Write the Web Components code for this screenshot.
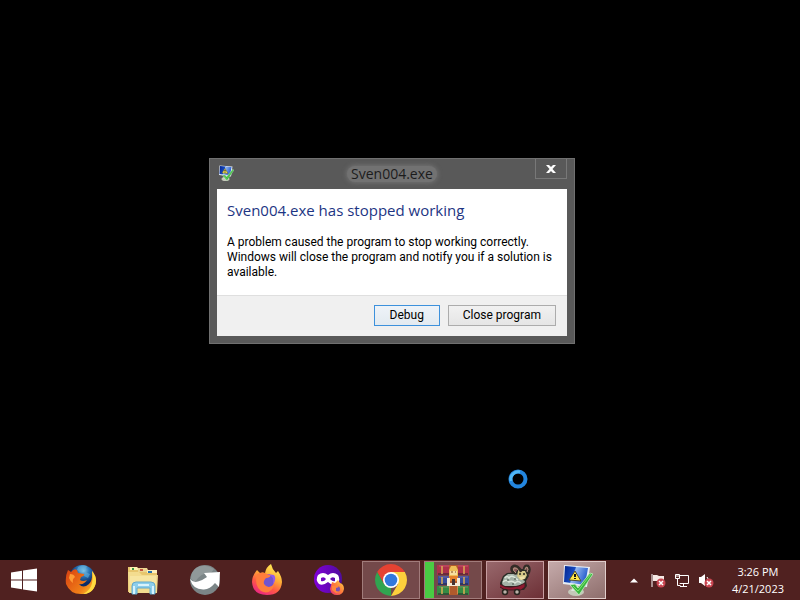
<!DOCTYPE html>
<html lang="en">
<head>
<meta charset="utf-8">
<title>Desktop</title>
<style>
html, body { height: 100%; }
body { margin: 0; background: #000; overflow: hidden; font-family: "Open Sans", "Noto Sans", sans-serif; font-size: 12px; }
</style>
</head>
<body>
<desktop-shell>
  <error-dialog slot="window" caption="Sven004.exe">
    <span slot="heading">Sven004.exe has stopped working</span>
    A problem caused the program to stop working correctly. Windows will close the program and notify you if a solution is available.
    <dialog-button slot="actions" primary>Debug</dialog-button>
    <dialog-button slot="actions">Close program</dialog-button>
  </error-dialog>
  <busy-cursor slot="window"></busy-cursor>
  <task-bar slot="bar">
    <task-item kind="start" label="Start"></task-item>
    <task-item kind="firefoxold" label="Firefox"></task-item>
    <task-item kind="explorer" label="File Explorer"></task-item>
    <task-item kind="share" label="Shortcut"></task-item>
    <task-item kind="firefox" label="Firefox Browser"></task-item>
    <task-item kind="private" label="Private browsing"></task-item>
    <task-item kind="chrome" label="Chrome" open></task-item>
    <task-item kind="winrar" label="WinRAR" open progress></task-item>
    <task-item kind="sheep" label="Sven004" open></task-item>
    <task-item kind="warning" label="Error report" open active></task-item>
    <system-tray slot="tray" time="3:26 PM" date="4/21/2023"></system-tray>
  </task-bar>
</desktop-shell>
<script>
const icons = {
start: `<svg viewBox="0 0 32 32"><path fill="#fff" d="M3 7.400 14 5.800V14.400H3ZM15 5.600 29 3.600V14.400H15ZM3 15.400H14V24.200L3 22.600ZM15 15.400H29V26.600L15 24.400Z"/></svg>`,
firefoxold: `<svg viewBox="0 0 32 32"><defs><radialGradient id="b" cx=".55" cy=".2"><stop stop-color="#8fd0ee"/><stop offset=".45" stop-color="#2a78b8"/><stop offset="1" stop-color="#0c2c68"/></radialGradient><linearGradient id="o" x1="0" x2="1" y1=".3" y2="1"><stop stop-color="#dc4a12"/><stop offset=".6" stop-color="#f08018"/><stop offset="1" stop-color="#ffd83a"/></linearGradient></defs><circle cx="17" cy="14" r="13" fill="url(#b)"/><path d="M13 3q5-3 9-1l-2 4-5 2-3-2M20 8l5 2-2 4-4-2" fill="#62afd9" opacity=".6"/><path fill="url(#o)" d="M3 6 6 8Q9 4 12 6L13 9 19 10Q20 12 16 13L15 16Q18 18 22 16Q19 21 14 20Q18 25 24 20Q28 16 27 7Q33 14 30 22Q26 31 16 30Q5 30 1 20Q0 12 3 6Z"/><path d="M27 7q7 8 2 17-4 6-11 6 8-4 9-11 1-5 0-12" fill="#ffdb40"/><path d="M5 10q4 0 5 3-3 2-2 6-3-2-4-5" fill="#ff9b35"/></svg>`,
explorer: `<svg viewBox="0 0 32 32"><path d="M1 3h9l2 3h18v22H1Z" fill="#e7c66d"/><path d="M3 3h7l2 3H3" fill="#fff1af"/><path d="M11 4h9l2 4H11" fill="#ecd691"/><path d="M20 6h10v3H20" fill="#fff0bd"/><path d="M1 8h11l3 3h16l-1 18H2Z" fill="#f3dc8f"/><path d="M5 5h2" stroke="#3a9b43" stroke-width="2"/><path d="M13 6h3" stroke="#c45640" stroke-width="2"/><path d="M21 8h4" stroke="#2672ac" stroke-width="2"/><path d="M3 12h26v8H3Z" fill="#f8e8a8" opacity=".7"/><path d="M5 30V22q0-4 4-4h15q4 0 4 4v8h-5v-6H10v6Z" fill="#8cceeb" stroke="#62a9cb"/><path d="M11 21h11" stroke="#d9f3fb" stroke-width="2"/><path d="M7 22v8M26 22v8" stroke="#d5f3ff" stroke-width="2"/></svg>`,
share: `<svg viewBox="0 0 32 32"><circle cx="16" cy="16" r="15" fill="#7b8587"/><path d="M7 4Q16-1 25 5L22 9Q12 8 6 18L2 15Q2 8 7 4" fill="#90999a"/><path fill="#fff" d="M1 15Q4 19 9 17.500Q14 16 18 13L15 9 31 8 30 23 26 19Q21 25 15 25.500Q4 26 1 15Z"/></svg>`,
firefox: `<svg viewBox="0 0 32 32"><defs><linearGradient id="f" x1=".75" x2=".25" y1="0" y2="1"><stop stop-color="#fff45a"/><stop offset=".4" stop-color="#ffab36"/><stop offset=".68" stop-color="#ff5945"/><stop offset="1" stop-color="#e92288"/></linearGradient></defs><path d="M6 6 9 9Q12 8 14 9Q15 3 20 0Q21 5 25 9L27 7Q31 13 31 18Q30 31 16 31Q2 31 1 18Q1 12 6 6Z" fill="url(#f)"/><circle cx="16" cy="17" r="7" fill="#7254cf"/><path d="M6 10q6-3 10 0l4 1q-1 3-5 3-3 3-2 6 4 6 11 0-5 12-14 7Q3 22 6 10" fill="#ff7d3c"/><path d="M16 10q8 2 6 10 4-5 1-9Z" fill="#9059f1"/></svg>`,
private: `<svg viewBox="0 0 32 32"><defs><linearGradient id="p"><stop stop-color="#8000d7"/><stop offset="1" stop-color="#4f0d9d"/></linearGradient><linearGradient id="q" x1="1" x2="0" y1="0" y2="1"><stop stop-color="#ffdb42"/><stop offset=".5" stop-color="#ff783b"/><stop offset="1" stop-color="#e83272"/></linearGradient></defs><circle cx="15" cy="15" r="14" fill="url(#p)"/><path fill="#fff" fill-rule="evenodd" d="M5 11Q10 7 15 11Q20 7 25 11Q28 16 24 20Q19 22 15 18Q10 22 6 20Q2 16 5 11M8 14v3q3 1 5-2-2-3-5-1M17 15q3 3 5 2v-3q-3-2-5 1"/><path d="m19 18 3 1 3-3 2 3q4 1 4 6-1 6-7 6t-7-6Z" fill="url(#q)"/><circle cx="24" cy="25" r="3" fill="#7952b5"/><path d="m19 22 5-1 2 2-3 1v3l4 1-4 1-4-3" fill="#ff863d"/></svg>`,
chrome: `<svg viewBox="0 0 32 32"><path d="M2.150 8A16 16 0 0 1 29.850 8H16L9 20Z" fill="#e54232"/><path d="M2.150 8 9 20 16 24 16 32A16 16 0 0 1 2.150 8" fill="#31a450"/><path d="M16 8h13.850A16 16 0 0 1 16 32L23 20" fill="#fdd03c"/><circle cx="16" cy="16" r="8" fill="#fff"/><circle cx="16" cy="16" r="6.300" fill="#3378dd"/></svg>`,
winrar: `<svg viewBox="0 0 32 32"><path fill="#ac304a" d="M0 1h32v10H0Z"/><path fill="#374b9b" d="M1 12h31v9H1Z"/><path fill="#358b43" d="M0 22h32v9H0Z"/><path d="M2 2h29M2 13h29M2 23h29" stroke="#ffb1b6" opacity=".3"/><path d="M1 10h30M1 20h30M1 30h30" stroke="#29232f"/><path d="M5 2v8M5 13v7M5 23v7M27 2v8m0 3v7m0 3v7" stroke="#dbac54" stroke-width="1.500"/><path d="M12 1h9v30h-9Z" fill="#b05a2c"/><path d="M12.500 22v8M20.500 22v8" stroke="#d08a4b"/><path d="M12 12V6l2-4h5l2 4v6Z" fill="#edbd57"/><path d="M13 7h7v4h-7Z" fill="#f8dfa0"/><path d="M12 12h9v5h-9Z" fill="#e5812c"/><path d="M10 14h3v5h7v-5h3v8H10Z" fill="#f5ead6"/><path d="M15 15h3v6h-3" fill="#433"/><path d="M14 8h2m2 0h1" stroke="#80491f"/></svg>`,
sheep: `<svg viewBox="0 0 32 32"><path d="M1 19 4 12 8 9 17 8 19 5 27 5 30 12 27 17 28 22 25 26 6 26 1 23Z" fill="#2a2c26"/><path d="M3 19 5 13 9 10 17 10 22 15 26 17 25 20 18 22H4Z" fill="#a5b3a8"/><path d="M6 14q2-3 4 0 2-3 5-1 2 2 4 3M4 18q3-3 6 0 3-2 6 1 3-3 6 0" stroke="#dce6da" fill="none" stroke-width="1.500"/><path d="M8 16h2m5-1h2m-4 5h2" stroke="#657469" stroke-width="1.500"/><path d="M19 7h7l2 4-2 4-5 1-3-4Z" fill="#d5c888"/><path d="M17 10Q11 7 13 3 17 0 21 5L22 8M25 6Q25 1 29 2q3 3 0 8" fill="none" stroke="#332c27" stroke-width="2.500"/><path d="M17 9Q13 6 15 4q3-1 5 3M26 6q0-3 2-3 2 2 0 5" fill="none" stroke="#b59a83"/><path d="M21 9v2m4-2v2" stroke="#292820" stroke-width="1.500"/><path d="m20 13 6-1-1 3-3 1" fill="#efe3aa"/><path d="M1 20q5 4 12 3 7 0 13-4v4l-4 3H6l-5-3" fill="#8f1930" stroke="#3f1b20"/><circle cx="6" cy="28" r="2.500" fill="#b9b1a8" stroke="#29251f" stroke-width="1.500"/><circle cx="18" cy="28" r="2.500" fill="#b9b1a8" stroke="#29251f" stroke-width="1.500"/></svg>`,
warning: `<svg viewBox="0 0 32 32"><defs><linearGradient id="w" x2="1" y2=".3"><stop stop-color="#02248d"/><stop offset=".45" stop-color="#174ac0"/><stop offset=".5" stop-color="#96b8ef"/><stop offset="1" stop-color="#2b61cf"/></linearGradient></defs><ellipse cx="15" cy="28" rx="8" ry="4" fill="#c4c8b9"/><path d="m3 1 26 2-3 20-24-3Z" fill="#e6edf4"/><path d="m4 2 23 2-3 17-21-3Z" fill="url(#w)"/><path d="m13 22-3 5h9l-2-5" fill="#dfe4df"/><path d="m14 7 6 10-12-1Z" fill="#ffe749" stroke="#4b4b36"/><path d="M14 10v3m0 1v1" stroke="#171717" stroke-width="2"/><path d="m9 21 5-1 3 4L29 9l3 1L18 31Z" fill="#39b53e" stroke="#c4efc1" stroke-width=".8"/><path d="m12 22 5 5L30 10" fill="none" stroke="#7de36f" stroke-width="1"/></svg>`,
flag: `<svg viewBox="0 0 16 16"><path d="M2 2v13" stroke="#fff"/><path d="M3 3h4l2 1h5v6H8L7 9H3Z" fill="#f6e9e5"/><circle cx="11" cy="11" r="4.500" fill="#c94550"/><path d="m9 9 4 4m0-4-4 4" stroke="#fff" stroke-width="1.500"/></svg>`,
network: `<svg viewBox="0 0 16 16"><path d="M5 3.500h9.500v8H5M9.500 12v2M6 14.500h7" fill="none" stroke="#fff"/><path d="M1.500 2.500h4v4h-4ZM3.500 6.500v7h3" fill="#562421" stroke="#fff"/><path d="M2 4h3" stroke="#fff"/></svg>`,
sound: `<svg viewBox="0 0 16 16"><path d="M1 5h2l4-3v12l-4-3H1Z" fill="#fff"/><path d="M9 5q2 2 1 5" fill="none" stroke="#fff"/><circle cx="11" cy="11" r="4.500" fill="#c94550"/><path d="m9 9 4 4m0-4-4 4" stroke="#fff" stroke-width="1.500"/></svg>`,
arrow: `<svg viewBox="0 0 16 16"><path d="M4 10.500 8 6.500 12 10.500Z" fill="#fff"/></svg>`
};
const reset = `*{box-sizing:border-box}button{font:inherit;margin:0;padding:0;border:0;background:none;color:inherit}svg{display:block}`;
function define(name, render) {
  customElements.define(name, class extends HTMLElement {
    constructor() { super(); this.attachShadow({ mode: "open" }); }
    connectedCallback() {
      const t = document.createElement("template");
      t.innerHTML = render(this);
      this.shadowRoot.replaceChildren(t.content.cloneNode(true));
    }
  });
}
define("desktop-shell", () => `<style>
:host{display:flex;flex-direction:column;height:100vh;background:#000}
main{flex:1;position:relative}
</style><main><slot name="window"></slot></main><slot name="bar"></slot>`);

define("error-dialog", el => `<style>${reset}
:host{position:absolute;left:209px;top:158px;width:366px;display:block;color:#000}
section{background:#595959;border:1px solid #707070;padding:0 7px 7px}
header{display:grid;grid-template-columns:32px 1fr 32px;height:30px}
header svg{width:16px;height:16px;margin:6px 0 0 1px}
h1{justify-self:center;align-self:center;margin:0;font-size:14px;line-height:16px;font-weight:400;color:#1c1c1c;padding:0 4px;border-radius:8px;background:#727272;box-shadow:0 0 4px 1px #727272}
.close{height:20px;border:1px solid #787878;border-top:0;display:grid;place-items:center}
.close svg{width:10px;height:10px;margin:0}
.body{background:#fff;padding:11px 10px 15px}
h2{margin:0 0 15px;font-size:15px;line-height:20px;font-weight:400;color:#1d3583}
p{margin:0;font-family:Roboto,"Open Sans",sans-serif;font-size:12px;line-height:15px}
footer{background:#f0f0f0;border-top:1px solid #dfdfdf;display:flex;justify-content:flex-end;gap:8px;padding:9px 11px 10px}
</style><section role="dialog" aria-labelledby="c"><header>${icons.warning}<h1 id="c">${el.getAttribute("caption")}</h1><button class="close" aria-label="Close"><svg viewBox="0 0 10 10"><path d="M0 1h3l2 2 2-2h3L6.500 5 10 9H7L5 7 3 9H0l3.500-4Z" fill="#fff"/></svg></button></header>
<div class="body"><h2><slot name="heading"></slot></h2><p><slot></slot></p></div><footer><slot name="actions"></slot></footer></section>`);

define("dialog-button", () => `<style>${reset}
:host{display:block}
button{height:21px;min-width:66px;padding:0 14px;font-family:Roboto,"Open Sans",sans-serif;font-size:12px;line-height:19px;border:1px solid #acacac;background:linear-gradient(#f1f1f1,#e5e5e5)}
:host([primary]) button{border-color:#3d91dc;background:linear-gradient(#eef3f8,#e3eaf0)}
</style><button><slot></slot></button>`);

define("busy-cursor", () => `<style>
:host{position:absolute;left:508px;top:469px;width:20px;height:20px;display:block}
svg{display:block}
</style><svg viewBox="0 0 20 20"><circle cx="10" cy="10" r="7.500" fill="none" stroke="#2385de" stroke-width="4"/><path d="M3 12A7.500 7.500 0 0 1 12 3" fill="none" stroke="#50b7f4" stroke-width="3"/></svg>`);

define("task-bar", () => `<style>
:host{display:block}
footer{display:flex;justify-content:space-between;height:40px;background:#502120}
nav{display:flex;gap:4px}
</style><footer><nav aria-label="Taskbar"><slot></slot></nav><slot name="tray"></slot></footer>`);

define("task-item", el => `<style>${reset}
:host{display:block;width:58px;padding:1px 0}
:host([kind=start]){width:48px}
button{width:100%;height:38px;display:grid;place-items:center;border:1px solid transparent}
svg{width:32px;height:32px}
:host([kind=start]) button{padding-top:2px}
:host([open]) button{background:#74494a;border-color:#a17c7b}
:host([kind=sheep]) button{background:linear-gradient(150deg,#98686c,#6d3036);border-color:#c79da0}
:host([active]) button{background:linear-gradient(150deg,#c5aaaa,#8e6e6c);border-color:#e1cdcb}
:host([progress]) button{background:linear-gradient(90deg,#4acb43 9px,#74494a 9px)}
</style><button aria-label="${el.getAttribute("label")}">${icons[el.getAttribute("kind")]}</button>`);

define("system-tray", el => `<style>${reset}
:host{display:flex;align-items:center;color:#fff;padding-right:16px}
.icons{display:flex;gap:8px;padding-right:18px}
button{display:block}
.icons svg{width:16px;height:16px}
.clock{font-size:11px;line-height:17px;text-align:center}
.clock span{display:block}
</style><div class="icons">${["arrow:Show hidden icons","flag:Action Center","network:Network","sound:Volume"].map(s => { const [k, l] = s.split(":"); return `<button aria-label="${l}">${icons[k]}</button>`; }).join("")}</div>
<button class="clock"><span>${el.getAttribute("time")}</span><span>${el.getAttribute("date")}</span></button>`);
</script>
</body>
</html>
